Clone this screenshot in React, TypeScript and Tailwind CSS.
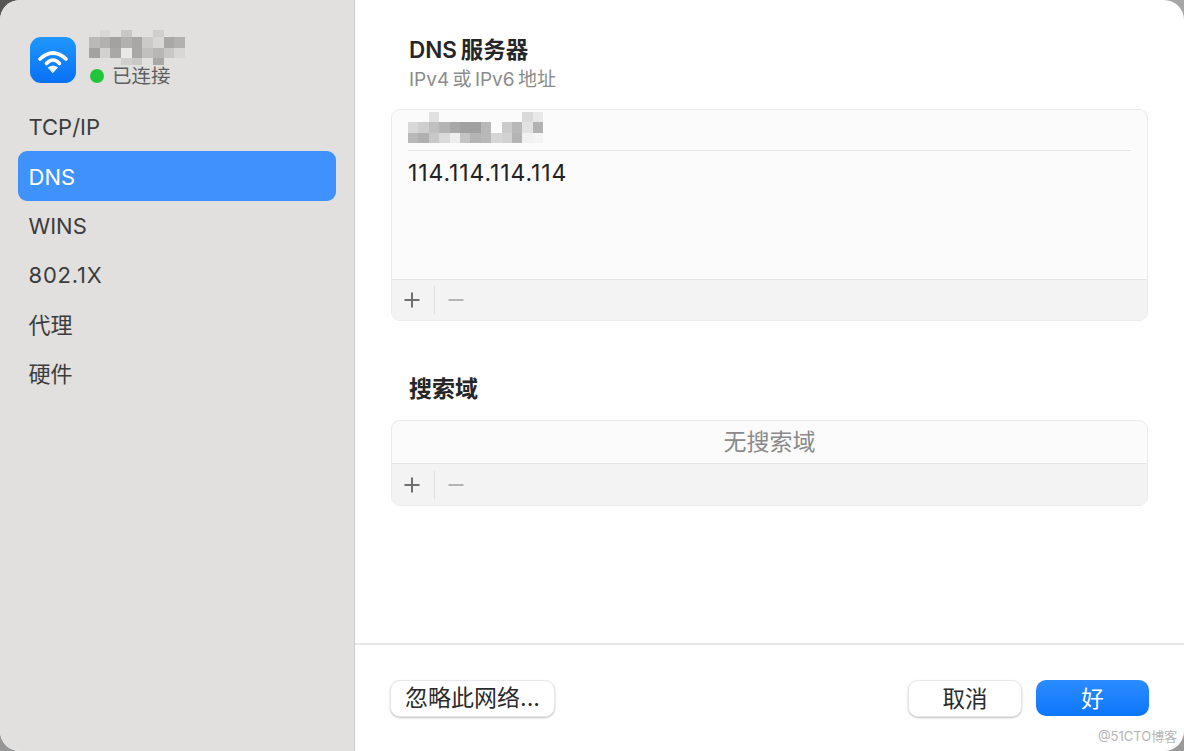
const font = { fontFamily: 'Inter, "Noto Sans CJK SC", sans-serif' };

function Mosaic({ cw, rows, cells }: { cw: number; rows: number[]; cells: [number, number, string][] }) {
  const cols = Math.max(...cells.map((c) => c[0])) + 1;
  const w = Math.ceil(cols * cw);
  const h = rows[rows.length - 1];
  return (
    <svg width={w} height={h} viewBox={`0 0 ${w} ${h}`} className="block" shapeRendering="crispEdges">
      {cells.map(([x, y, c], i) => (
        <rect key={i} x={x * cw} y={rows[y]} width={cw} height={rows[y + 1] - rows[y]} fill={c} />
      ))}
    </svg>
  );
}

const nameCells: [number, number, string][] = [
  [1,0,'#d8d7d5'],[3,0,'#c8c7c5'],[6,0,'#d0cfcd'],
  [0,1,'#bab9b7'],[1,1,'#b2b1af'],[2,1,'#a3a2a0'],[3,1,'#b2b1af'],[4,1,'#a8a7a5'],[5,1,'#cbcac8'],[6,1,'#d8d7d5'],[7,1,'#a9a8a6'],[8,1,'#b2b1af'],
  [0,2,'#a3a2a0'],[1,2,'#d2d1cf'],[2,2,'#a9a8a6'],[3,2,'#e9e8e6'],[4,2,'#a9a8a6'],[5,2,'#c1c0be'],[6,2,'#b8b7b5'],[7,2,'#c8c7c5'],[8,2,'#d8d7d5'],
  [3,3,'#d0cfcd'],[4,3,'#c9c8c6'],[6,3,'#a9a8a6'],
];

const dnsCells: [number, number, string][] = [
  [2,0,'#e0e0e0'],[11,0,'#dadada'],[12,0,'#e8e8e8'],
  [0,1,'#d8d8d8'],[1,1,'#cecece'],[2,1,'#c0c0c0'],[3,1,'#b4b4b4'],[4,1,'#a8a8a8'],[5,1,'#a0a0a0'],[6,1,'#a0a0a0'],[7,1,'#b8b8b8'],[9,1,'#cbcbcb'],[10,1,'#b8b8b8'],[11,1,'#e2e2e2'],[12,1,'#b2b2b2'],
  [0,2,'#b8b8b8'],[1,2,'#b0b0b0'],[2,2,'#c8c8c8'],[3,2,'#dadada'],[4,2,'#eeeeee'],[5,2,'#c4c4c4'],[6,2,'#b4b4b4'],[7,2,'#b8b8b8'],[8,2,'#d6d6d6'],[9,2,'#d2d2d2'],[10,2,'#b4b4b4'],[11,2,'#f1f1f1'],[12,2,'#f4f4f4'],
];

function Toolbar({ tall }: { tall?: boolean }) {
  return (
    <div className={`${tall ? 'h-[42px]' : 'h-[41px]'} bg-[#f3f3f3] border-t border-[#e3e3e3] flex items-center pl-[11px]`}>
      <svg width="18" height="18" viewBox="0 0 18 18">
        <path d="M9 1.500v15M1.500 9h15" stroke="#6f6f6f" strokeWidth="2" fill="none" />
      </svg>
      <div className="w-px h-[28px] bg-[#e0e0e0] ml-[13px]" />
      <svg width="18" height="18" viewBox="0 0 18 18" className="ml-[12px]">
        <path d="M1.500 9h15" stroke="#b4b4b4" strokeWidth="2" fill="none" />
      </svg>
    </div>
  );
}

const items = ['TCP/IP', 'DNS', 'WINS', '802.1X', '代理', '硬件'];

export default function App() {
  return (
    <div style={font} className="w-[1184px] h-[751px] bg-[linear-gradient(135deg,#555555_0%,#aaaaaa_50%,#999999_100%)] overflow-hidden relative">
      <div className="w-full h-full rounded-[20px] overflow-hidden flex bg-white">
        <aside className="w-[355px] shrink-0 bg-[#e1e0de] border-r border-[#cfcecc] pl-[18px] pr-[18px]">
          <div className="flex h-[103px] pt-[30px]">
            <div className="w-[46px] h-[46px] mt-[7px] ml-[12px] rounded-[11px] bg-gradient-to-b from-[#1f97ff] to-[#0a70f5] flex items-center justify-center shrink-0">
              <svg width="34" height="28" viewBox="0 0 34 28" fill="none" stroke="#fff" strokeLinecap="round" strokeWidth="3.600">
                <path d="M4 13 Q17 1 30 13" />
                <path d="M10.500 17.500 Q17 10.500 23.500 17.500" />
                <path d="M12.500 21.500 Q17 18.500 21.500 21.500 L17 26.500 Z" fill="#fff" stroke="#fff" strokeWidth="0.800" strokeLinejoin="round" />
              </svg>
            </div>
            <div className="ml-[13px]">
              <Mosaic cw={10.67} rows={[0, 7, 18, 28, 35]} cells={nameCells} />
              <div className="flex items-center -mt-[1px]">
                <div className="w-[14px] h-[14px] rounded-full bg-[#1fc63c] ml-[1px]" />
                <span className="ml-[8px] text-[19.500px] leading-[24px] text-[#5e5e5e]">已连接</span>
              </div>
            </div>
          </div>
          <nav className="flex flex-col -mt-[1px]">
            {items.map((t) => (
              <div
                key={t}
                className={`h-[49.400px] rounded-[9px] flex items-center pl-[10.500px] pt-[2px] text-[22px] ${
                  t === 'DNS' ? 'bg-[#3f92fb] text-white' : 'text-[#3c3c3c]'
                } ${t === '802.1X' ? 'tracking-[0.8px]' : ''}`}
              >
                {t}
              </div>
            ))}
          </nav>
        </aside>
        <main className="flex-1 flex flex-col min-w-0">
          <div className="h-[643px] pl-[36px] pr-[36px] pt-[35px]">
            <h2 className="ml-[18px] text-[22.500px] leading-[30px] font-semibold text-[#262626] [word-spacing:-2px]">DNS 服务器</h2>
            <p className="ml-[18px] pt-[1px] text-[19px] leading-[28px] text-[#8c8c8c] [word-spacing:-2px]">IPv4 或 IPv6 地址</p>
            <div className="mt-[15px] h-[212px] rounded-[9px] border border-[#ebebeb] bg-[#fbfbfb] overflow-hidden flex flex-col">
              <div className="flex-1 px-[16px]">
                <div className="h-[41px] border-b border-[#e6e6e6] pt-[2px]">
                  <Mosaic cw={10.400} rows={[0, 10, 21, 31]} cells={dnsCells} />
                </div>
                <div className="text-[23px] tracking-[0.9px] leading-[44px] text-[#222222]">114.114.114.114</div>
              </div>
              <Toolbar />
            </div>
            <h2 className="ml-[18px] mt-[53px] text-[23px] leading-[30px] font-semibold text-[#262626]">搜索域</h2>
            <div className="mt-[16px] h-[86px] rounded-[9px] border border-[#ebebeb] bg-[#fbfbfb] overflow-hidden flex flex-col">
              <div className="flex-1 flex items-center justify-center text-[23px] text-[#8a8a8a]">无搜索域</div>
              <Toolbar tall />
            </div>
          </div>
          <div className="h-[2px] bg-[#e6e6e6]" />
          <div className="flex-1 flex items-start pl-[35px] pr-[35px] pt-[35px]">
            <button className="w-[165px] h-[37px] rounded-[10px] bg-white border border-[#e8e8e8] shadow-[0_1px_2px_rgba(0,0,0,0.25)] text-[23px] leading-[33px] text-[#2b2b2b] flex items-center justify-center">
              忽略此网络...
            </button>
            <button className="ml-auto w-[114px] h-[37px] rounded-[10px] bg-white border border-[#e8e8e8] shadow-[0_1px_2px_rgba(0,0,0,0.25)] text-[22.500px] leading-[33px] text-[#2b2b2b] flex items-center justify-center">
              取消
            </button>
            <button className="ml-[14px] w-[113px] h-[36px] rounded-[10px] bg-gradient-to-b from-[#2b8cff] to-[#0a76fb] text-[22.500px] leading-[33px] text-white flex items-center justify-center">
              好
            </button>
          </div>
        </main>
      </div>
      <div className="absolute left-[1098px] top-[727px] text-[13px] leading-[18px] text-[#b5b5b5]">@51CTO博客</div>
    </div>
  );
}
